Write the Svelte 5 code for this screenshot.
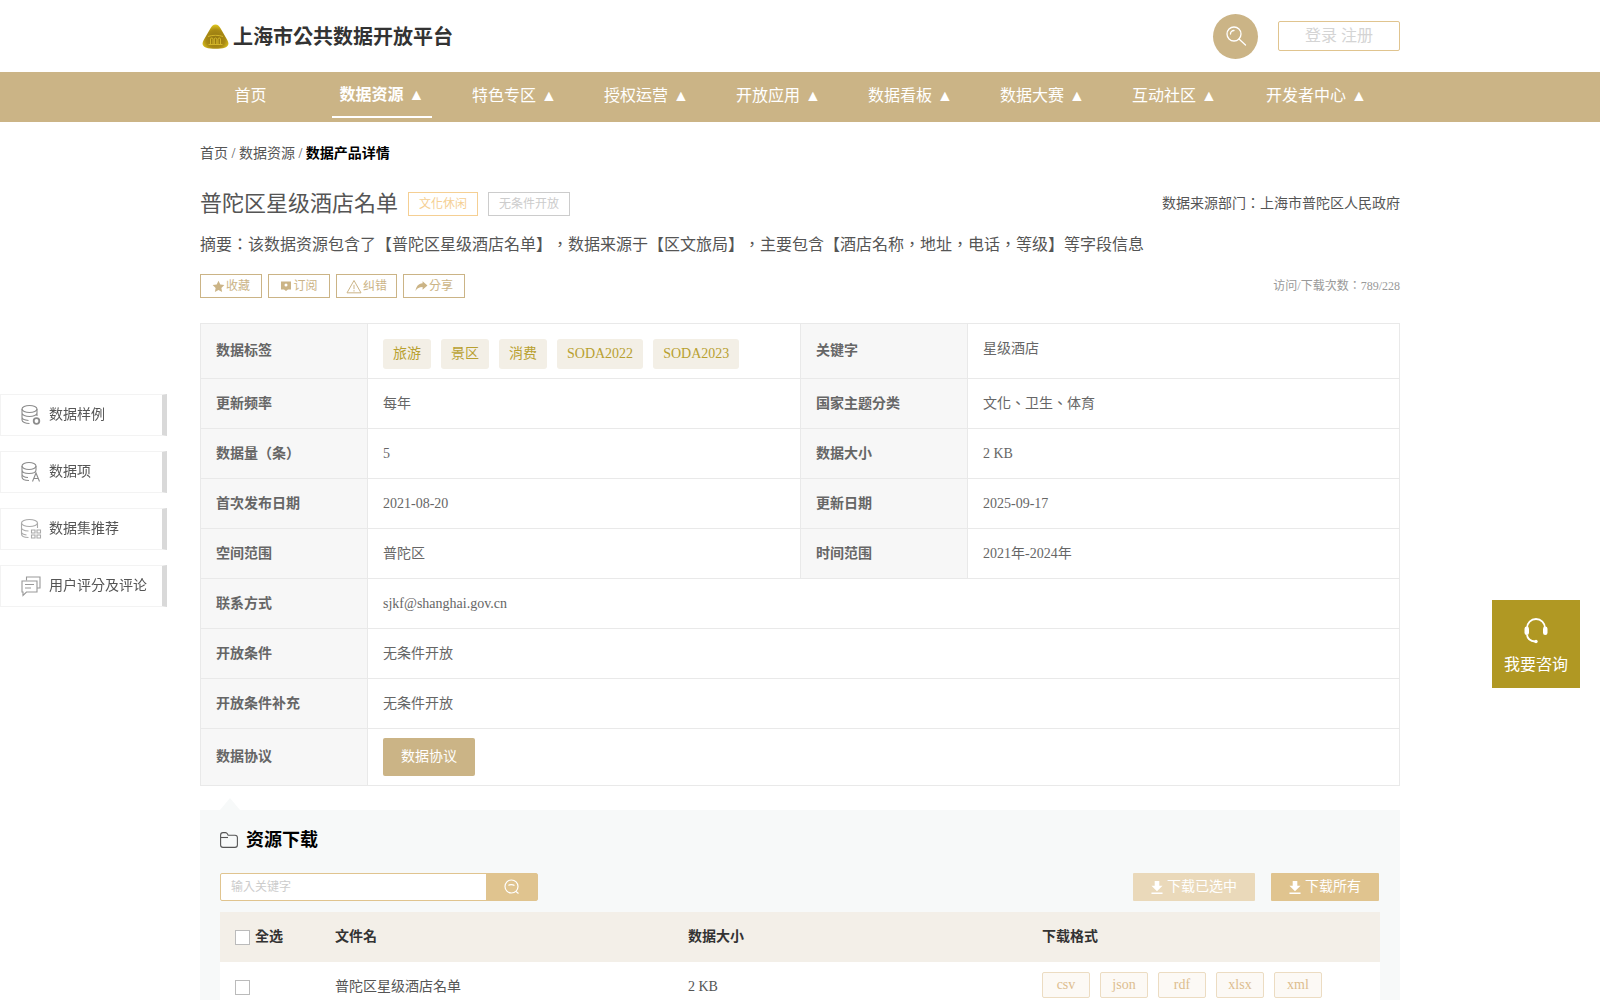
<script lang="ts">
  const nav = [
    { label: "首页" },
    { label: "数据资源 ▲", active: true },
    { label: "特色专区 ▲" },
    { label: "授权运营 ▲" },
    { label: "开放应用 ▲" },
    { label: "数据看板 ▲" },
    { label: "数据大赛 ▲" },
    { label: "互动社区 ▲" },
    { label: "开发者中心 ▲" },
  ];
  const chips = ["旅游", "景区", "消费", "SODA2022", "SODA2023"];
  const pairs = [
    ["更新频率", "每年", "国家主题分类", "文化、卫生、体育"],
    ["数据量（条）", "5", "数据大小", "2 KB"],
    ["首次发布日期", "2021-08-20", "更新日期", "2025-09-17"],
    ["空间范围", "普陀区", "时间范围", "2021年-2024年"],
  ];
  const wide = [
    ["联系方式", "sjkf@shanghai.gov.cn"],
    ["开放条件", "无条件开放"],
    ["开放条件补充", "无条件开放"],
  ];
  const formats = ["csv", "json", "rdf", "xlsx", "xml"];
</script>

<div class="page">
  <header class="wrap top">
    <div class="brand">
      <svg width="27" height="25" viewBox="0 0 27 25" aria-hidden="true">
        <defs>
          <radialGradient id="gold" cx="0.5" cy="0.6" r="0.62">
            <stop offset="0" stop-color="#8f7310" />
            <stop offset="0.6" stop-color="#a98a14" />
            <stop offset="1" stop-color="#e6cf1f" />
          </radialGradient>
        </defs>
        <path d="M13.500 .5c2.200 0 3.700 1.500 5 3.800l6.800 11.600c2 3.400 1.400 6.400-2 7.500-3 1-6.300 1.300-9.800 1.300s-6.800-.3-9.800-1.300c-3.400-1.100-4-4.100-2-7.500L8.500 4.300C9.800 2 11.300 .5 13.500 .5z" fill="url(#gold)" />
        <path d="M6 12.500c4-1.600 11-1.600 15 0M6.500 20.500h14M8.500 20v-5c0-1.400 2.500-1.400 2.500 0v5M12.300 20v-5c0-1.400 2.500-1.400 2.500 0v5M16 20v-5c0-1.400 2.500-1.400 2.500 0v5" fill="none" stroke="#d9bb2c" stroke-width=".9" />
      </svg>
      <span>上海市公共数据开放平台</span>
    </div>
    <div class="top-right">
      <div class="search-round">
        <svg width="24" height="24" viewBox="0 0 24 24" fill="none" stroke="#fff" stroke-width="1.300" aria-hidden="true">
          <circle cx="10" cy="10" r="7" />
          <path d="M6.500 10a3.500 3.500 0 0 1 3.500-3.500M15 15l6.500 6" stroke-linecap="round" />
        </svg>
      </div>
      <div class="login">登录 注册</div>
    </div>
  </header>

  <nav class="nav">
    <ul class="wrap">
      {#each nav as item}
        <li class:active={item.active}><span>{item.label}</span></li>
      {/each}
    </ul>
  </nav>

  <main class="wrap">
    <div class="crumbs">首页 / 数据资源 / <b>数据产品详情</b></div>

    <div class="title-row">
      <h1>普陀区星级酒店名单</h1>
      <span class="tag gold">文化休闲</span>
      <span class="tag grey">无条件开放</span>
      <span class="source">数据来源部门：上海市普陀区人民政府</span>
    </div>

    <p class="abstract">摘要：该数据资源包含了【普陀区星级酒店名单】，数据来源于【区文旅局】，主要包含【酒店名称，地址，电话，等级】等字段信息</p>

    <div class="actions">
      <button>
        <svg width="13" height="13" viewBox="0 0 24 24" fill="#cbb486" aria-hidden="true"><path d="M12 1.500l3.300 6.900 7.500 1-5.500 5.200 1.400 7.500L12 18.400l-6.700 3.700 1.400-7.500L1.200 9.400l7.500-1z" /></svg>收藏
      </button>
      <button>
        <svg width="12" height="12" viewBox="0 0 24 24" fill="#cbb486" aria-hidden="true"><path fill-rule="evenodd" d="M2 3h20v16h-6l-4 3-4-3H2zM12 7a3 3 0 1 0 0 6 3 3 0 0 0 0-6z" /></svg>订阅
      </button>
      <button class="tight">
        <svg width="16" height="15" viewBox="0 0 24 22" fill="none" stroke="#cbb486" stroke-width="1.500" aria-hidden="true"><path d="M12 2L1.500 20.500h21zM12 8.500v6.500M12 16.500v2" /></svg>纠错
      </button>
      <button>
        <svg width="13" height="12" viewBox="0 0 24 22" fill="#cbb486" aria-hidden="true"><path d="M14 2l9 8-9 8v-5C8 13 4 15 1 20c1-8 5-13 13-14z" /></svg>分享
      </button>
      <span class="counts">访问/下载次数：789/228</span>
    </div>

    <table class="info">
      <colgroup>
        <col class="c-label" /><col class="c-value" /><col class="c-label" /><col />
      </colgroup>
      <tbody>
        <tr class="first">
          <th>数据标签</th>
          <td>
            <div class="chips">
              {#each chips as chip}<span>{chip}</span>{/each}
            </div>
          </td>
          <th>关键字</th>
          <td class="raise">星级酒店</td>
        </tr>
        {#each pairs as p}
          <tr>
            <th>{p[0]}</th><td>{p[1]}</td><th>{p[2]}</th><td>{p[3]}</td>
          </tr>
        {/each}
        {#each wide as w}
          <tr>
            <th>{w[0]}</th><td colspan="3">{w[1]}</td>
          </tr>
        {/each}
        <tr class="last">
          <th>数据协议</th>
          <td colspan="3"><span class="agree">数据协议</span></td>
        </tr>
      </tbody>
    </table>

    <section class="download">
      <h2>
        <svg width="18" height="16" viewBox="0 0 18 16" fill="none" stroke="#555" stroke-width="1.100" aria-hidden="true">
          <path d="M.6 3.200C.6 1.500 1.500.6 3 .6h2.500c1 0 1.500.5 2 1.400l.6 1.200h6.900c1.800 0 2.400 1 2.400 2.400v7.500c0 1.500-.9 2.300-2.400 2.300H3c-1.500 0-2.400-.8-2.400-2.300z" />
          <path d="M1 5.500h7" />
        </svg>
        资源下载
      </h2>

      <div class="tools">
        <div class="search">
          <span class="placeholder">输入关键字</span>
          <span class="go">
            <svg width="18" height="18" viewBox="0 0 18 18" fill="none" stroke="#fff" stroke-width="1.200" aria-hidden="true">
              <circle cx="8.500" cy="8.500" r="6.500" />
              <path d="M5.500 7.500c.6-1.300 4.400-1.300 6 0M13 13.500l2.500 2" />
            </svg>
          </span>
        </div>
        <div class="dl-btns">
          <span class="dl pale">
            <svg width="12" height="13" viewBox="0 0 13 14" fill="#fff" aria-hidden="true"><path d="M4 0h5v5h3.500L6.500 11 .5 5H4zM.5 12.500h12V14H.5z" /></svg>下载已选中
          </span>
          <span class="dl">
            <svg width="12" height="13" viewBox="0 0 13 14" fill="#fff" aria-hidden="true"><path d="M4 0h5v5h3.500L6.500 11 .5 5H4zM.5 12.500h12V14H.5z" /></svg>下载所有
          </span>
        </div>
      </div>

      <table class="files">
        <colgroup>
          <col class="f-check" /><col class="f-name" /><col class="f-size" /><col />
        </colgroup>
        <thead>
          <tr>
            <th><span class="check-cell"><i class="box"></i>全选</span></th>
            <th>文件名</th>
            <th>数据大小</th>
            <th>下载格式</th>
          </tr>
        </thead>
        <tbody>
          <tr>
            <td><i class="box"></i></td>
            <td>普陀区星级酒店名单</td>
            <td>2 KB</td>
            <td>
              <div class="formats">
                {#each formats as f}<span>{f}</span>{/each}
              </div>
            </td>
          </tr>
        </tbody>
      </table>
    </section>
  </main>

  <aside class="side">
    <div class="side-item">
      <svg width="22" height="22" viewBox="0 0 22 22" fill="none" stroke="#8c8c8c" stroke-width="1.100" aria-hidden="true">
        <ellipse cx="9.500" cy="5" rx="7.500" ry="3.500" />
        <path d="M2 5v11c0 2 3.500 3.500 7.500 3.500M2 9c0 2 3.500 3.500 7.500 3.500S17 11 17 9V5M2 13c0 2 3.500 3.300 6.500 3.500M17 9v3" />
        <circle cx="16.500" cy="17" r="2.800" stroke-width="1.800" />
      </svg>
      数据样例
    </div>
    <div class="side-item">
      <svg width="22" height="22" viewBox="0 0 22 22" fill="none" stroke="#8c8c8c" stroke-width="1.100" aria-hidden="true">
        <ellipse cx="9" cy="5" rx="7" ry="3.500" />
        <path d="M2 5v11c0 2 3 3.500 7 3.500M2 9c0 2 3 3.500 7 3.500s7-1.500 7-3.500V5M2 13c0 2 3 3.300 6 3.500M12.500 20.500l3.500-8.500 3.500 8.500M13.800 17.500h4.400" />
      </svg>
      数据项
    </div>
    <div class="side-item">
      <svg width="22" height="22" viewBox="0 0 22 22" fill="none" stroke="#aaa" stroke-width="1.100" aria-hidden="true">
        <ellipse cx="9.500" cy="5" rx="8" ry="3.500" />
        <path d="M1.500 5v11c0 2 3 3.500 7 3.500M1.500 9.500c0 2 3 3.300 7 3.500M1.500 14c0 1.500 2 2.500 5 3M17.500 5v5" />
        <path d="M11.500 12h3.500v3h-3.500zM17 12h3.500v3H17zM11.500 17h3.500v3h-3.500zM17 17h3.500v3H17z" />
      </svg>
      数据集推荐
    </div>
    <div class="side-item">
      <svg width="22" height="22" viewBox="0 0 22 22" fill="none" stroke="#999" stroke-width="1.100" aria-hidden="true">
        <path d="M6.500 5.500V2h13.500v11h-3" />
        <path d="M2 6h15v11H6.500L3 20.500V17H2zM5 9.500h9M5 13h6" />
      </svg>
      用户评分及评论
    </div>
  </aside>

  <aside class="consult">
    <svg width="28" height="28" viewBox="0 0 28 28" fill="none" stroke="#fff" stroke-width="1.800" aria-hidden="true">
      <path d="M5 14v-3a9 9 0 0 1 18 0v3" />
      <path d="M5 18c.5 3.500 3 6 8 6.500" />
      <rect x="2.500" y="9.500" width="4.500" height="8.500" rx="2.200" fill="#fff" stroke="none" />
      <rect x="21" y="9.500" width="4.500" height="8.500" rx="2.200" fill="#fff" stroke="none" />
      <circle cx="14" cy="24.500" r="1.700" fill="#fff" stroke="none" />
    </svg>
    <span>我要咨询</span>
  </aside>
</div>

<style>
  :global(body) {
    background: #fff;
    font-family: "Liberation Serif", "Noto Sans CJK TC", serif;
    text-spacing-trim: space-all;
    color: #555;
  }
  .page { overflow: hidden; height: 1000px; line-height: 20px; }
  .wrap { width: 1200px; margin: 0 auto; }

  .top {
    height: 72px;
    display: flex; align-items: center; justify-content: space-between;
  }
  .brand {
    display: flex; align-items: center; gap: 4px; margin-left: 2px;
    font-size: 20px; font-weight: 700; color: #333;
  }
  .brand span { padding-top: 2px; }
  .top-right { display: flex; align-items: center; gap: 20px; }
  .search-round {
    width: 45px; height: 45px; border-radius: 50%;
    background: #cbb486;
    display: flex; align-items: center; justify-content: center;
  }
  .login {
    width: 120px; height: 28px; line-height: 28px; text-align: center;
    border: 1px solid #e0c48f; border-radius: 2px;
    font-size: 16px; color: #d4d4d4;
  }

  .nav { height: 50px; background: #cbb486; }
  .nav ul {
    list-style: none; padding: 0;
    display: flex; height: 50px;
  }
  .nav li {
    flex: 0 0 132px; margin: 0;
    display: flex; justify-content: center;
    font-size: 16px; color: #fff; line-height: 47px;
    word-spacing: 1px; white-space: nowrap;
  }
  .nav li:first-child { margin-left: -16px; }
  .nav li:last-child { flex-basis: 152px; }
  .nav li span { display: block; height: 46px; margin-left: 1px; }
  .nav li.active span {
    width: 100px; height: 44px; margin-left: 0; text-align: center; font-weight: 700;
    line-height: 45px; border-bottom: 2px solid #fff;
  }

  .crumbs { margin-top: 23px; font-size: 14px; line-height: 18px; color: #555; }
  .crumbs b { color: #000; }

  .title-row { margin-top: 26px; display: flex; align-items: center; height: 30px; }
  h1 { margin: 0; font-size: 22px; font-weight: 400; color: #555; line-height: 30px; }
  .tag {
    height: 22px; line-height: 22px; padding: 0 10px; margin-left: 10px;
    border: 1px solid; font-size: 12px;
  }
  .tag.gold { color: #f5cf93; border-color: #f5cf93; }
  .tag.grey { color: #ccc; border-color: #ccc; }
  .source { margin-left: auto; font-size: 14px; color: #555; }

  .abstract { margin: 11px 0 0; font-size: 16px; line-height: 30px; color: #555; }

  .actions { margin-top: 14px; display: flex; align-items: center; gap: 6px; height: 24px; }
  .actions button {
    width: 62px; height: 24px; padding: 0;
    display: flex; align-items: center; justify-content: center; gap: 1px;
    background: #fff; border: 1px solid #cbb486;
    font: inherit; font-size: 12px; color: #cbb486;
  }
  .actions button.tight { width: 61px; }
  .counts { margin-left: auto; font-size: 12px; color: #999; }

  .info {
    margin-top: 25px; width: 1200px;
    table-layout: fixed; border-collapse: collapse;
  }
  .info .c-label { width: 167px; }
  .info .c-value { width: 433px; }
  .info th, .info td {
    box-sizing: border-box;
    height: 50px; padding: 0 15px;
    border: 1px solid #e9e9e9;
    font-size: 14px; text-align: left; color: #666;
  }
  .info th { background: #f7f7f7; font-weight: 700; }
  .info .first th, .info .first td { height: 55px; }
  .info .last th, .info .last td { height: 57px; }
  .info .raise { vertical-align: top; padding-top: 15px; }
  .chips { display: flex; gap: 10px; margin-top: 6px; }
  .chips span {
    height: 30px; line-height: 30px; padding: 0 10px;
    background: #f3efe6; border-radius: 3px;
    color: #b8a030;
  }
  .agree {
    display: inline-block; width: 92px; height: 38px; line-height: 38px;
    text-align: center; vertical-align: middle;
    background: #cbb486; border-radius: 2px; color: #fff;
  }

  .download {
    position: relative;
    margin-top: 24px; padding: 0 20px 30px;
    background: #f7f9f9;
  }
  .download::before {
    content: ""; position: absolute; left: 20px; top: -12px;
    border: 10px solid transparent; border-top: 0;
    border-bottom: 12px solid #f7f9f9;
  }
  h2 {
    margin: 0; padding-top: 15px;
    display: flex; align-items: center; gap: 8px;
    font-size: 18px; line-height: 30px; font-weight: 700; color: #000;
  }
  .tools { margin-top: 18px; display: flex; justify-content: space-between; }
  .search {
    width: 318px; height: 28px; box-sizing: border-box;
    display: flex; justify-content: space-between;
    background: #fff; border: 1px solid #e0c48f; border-radius: 2px;
  }
  .placeholder { padding-left: 10px; font-size: 12px; line-height: 27px; color: #ccc; }
  .go {
    width: 51px;
    display: flex; align-items: center; justify-content: center;
    background: #e0c48f;
  }
  .dl-btns { display: flex; gap: 16px; margin-right: 1px; }
  .dl {
    height: 28px; padding: 0 18px;
    display: flex; align-items: center; gap: 4px;
    background: #e0c48f; border-radius: 1px;
    font-size: 14px; color: #fff;
  }
  .dl.pale { background: #ead9ba; }

  .files {
    margin-top: 11px; width: 1160px;
    table-layout: fixed; border-collapse: collapse;
    font-size: 14px;
  }
  .f-check { width: 115px; }
  .f-name { width: 353px; }
  .f-size { width: 354px; }
  .files th {
    height: 50px; padding: 0;
    background: #f3efe8; text-align: left; color: #333; font-weight: 700;
  }
  .files td {
    height: 50px; padding: 0;
    background: #fff; color: #555;
  }
  .files th:first-child, .files td:first-child { padding-left: 15px; }
  .check-cell { display: flex; align-items: center; gap: 5px; }
  .box {
    display: inline-block; width: 13px; height: 13px;
    background: #fff; border: 1px solid #bbb;
    vertical-align: middle;
  }
  .formats { display: flex; gap: 10px; margin-bottom: 4px; }
  .formats span {
    width: 46px; height: 24px; line-height: 24px; text-align: center;
    background: #fcf9f5; border: 1px solid #ecdcc2; border-radius: 2px;
    color: #dcbd8f;
  }

  .side {
    position: fixed; left: 0; top: 394px;
    display: flex; flex-direction: column; gap: 15px;
  }
  .side-item {
    width: 142px; height: 40px;
    padding-left: 19px;
    display: flex; align-items: center; gap: 7px;
    background: #fff;
    border: 1px solid #f3f3f3; border-right: 5px solid #d9d9d9;
    font-size: 14px; color: #555;
  }

  .consult {
    position: fixed; right: 20px; top: 600px;
    width: 88px; height: 84px; padding-top: 4px;
    display: flex; flex-direction: column; align-items: center; justify-content: center; gap: 10px;
    background: #b09823; color: #fff; font-size: 16px;
  }
</style>
